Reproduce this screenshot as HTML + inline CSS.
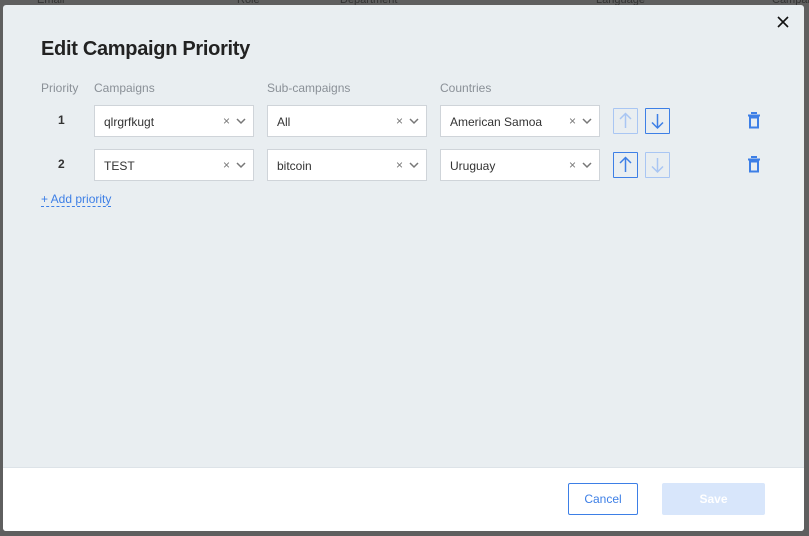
<!DOCTYPE html>
<html><head><style>
*{box-sizing:border-box;margin:0;padding:0}
body{width:809px;height:536px;background:#5f5f5f;font-family:"Liberation Sans",sans-serif;position:relative;overflow:hidden}
.bgt{position:absolute;top:-6px;font-size:11px;color:#333}
.m{position:absolute;left:3px;top:5px;width:801px;height:526px;background:#e9eef1;border-radius:3px;overflow:hidden}
.f{position:absolute;left:0;top:462px;width:801px;height:64px;background:#fff;border-top:1px solid #dde3e8}
.t{position:absolute;left:38px;top:33px;font-size:20px;font-weight:bold;color:#222;letter-spacing:-0.3px}
.x{position:absolute;left:774px;top:11px}
.h{position:absolute;top:76px;font-size:12px;color:#8a9097}
.n{position:absolute;font-size:12px;font-weight:bold;color:#333}
.i{position:absolute;width:160px;height:32px;background:#fff;border:1px solid #cfd4d9;font-size:12px;color:#333;padding:9px 0 0 9px}
.i .c{position:absolute;right:23px;top:8px;color:#777;font-size:12px}
.i svg{position:absolute;right:7px;top:12px}
.b{position:absolute;width:25px;height:26px;border:1px solid #3d7fe6;border-radius:1px}
.b.d{border-color:#a9c6f3}
.tr{position:absolute}
.a{position:absolute;left:38px;top:188px;font-size:12px;color:#3d7fe6;border-bottom:1px dashed #3d7fe6;line-height:13px}
.cn{position:absolute;left:565px;top:478px;width:70px;height:32px;border:1px solid #3d7fe6;border-radius:2px;color:#3d7fe6;font-size:12px;text-align:center;line-height:30px;background:#fff}
.sv{position:absolute;left:659px;top:478px;width:103px;height:32px;background:#d8e6fb;border-radius:2px;color:#fff;font-size:12px;text-align:center;line-height:32px;font-weight:bold}
</style></head><body>
<div class="bgt" style="left:37px">Email</div><div class="bgt" style="left:237px">Role</div><div class="bgt" style="left:340px">Department</div><div class="bgt" style="left:596px">Language</div><div class="bgt" style="left:772px">Campaign</div>
<div class="m">
<div class="t">Edit Campaign Priority</div>
<svg class="x" width="12" height="12"><path d="M1 1l10 10M11 1L1 11" stroke="#111" stroke-width="1.6"/></svg>
<div class="h" style="left:38px">Priority</div>
<div class="h" style="left:91px">Campaigns</div>
<div class="h" style="left:264px">Sub-campaigns</div>
<div class="h" style="left:437px">Countries</div>
<div class="n" style="left:55px;top:108px">1</div>
<div class="n" style="left:55px;top:152px">2</div>

<div class="i" style="left:91px;top:100px">qlrgrfkugt<span class="c">×</span><svg width="10" height="7"><path d="M1 1l4 4 4-4" stroke="#777" stroke-width="1.5" fill="none"/></svg></div>
<div class="i" style="left:264px;top:100px">All<span class="c">×</span><svg width="10" height="7"><path d="M1 1l4 4 4-4" stroke="#777" stroke-width="1.5" fill="none"/></svg></div>
<div class="i" style="left:437px;top:100px">American Samoa<span class="c">×</span><svg width="10" height="7"><path d="M1 1l4 4 4-4" stroke="#777" stroke-width="1.5" fill="none"/></svg></div>
<div class="i" style="left:91px;top:144px">TEST<span class="c">×</span><svg width="10" height="7"><path d="M1 1l4 4 4-4" stroke="#777" stroke-width="1.5" fill="none"/></svg></div>
<div class="i" style="left:264px;top:144px">bitcoin<span class="c">×</span><svg width="10" height="7"><path d="M1 1l4 4 4-4" stroke="#777" stroke-width="1.5" fill="none"/></svg></div>
<div class="i" style="left:437px;top:144px">Uruguay<span class="c">×</span><svg width="10" height="7"><path d="M1 1l4 4 4-4" stroke="#777" stroke-width="1.5" fill="none"/></svg></div>

<div class="b d" style="left:610px;top:103px"><svg width="23" height="24"><path d="M11.5 5v14M6 10l5.5-5.5L17 10" stroke="#a9c6f3" stroke-width="1.5" fill="none"/></svg></div>
<div class="b" style="left:642px;top:103px"><svg width="23" height="24"><path d="M11.5 5v14M6 13.5l5.5 5.5 5.5-5.5" stroke="#3d7fe6" stroke-width="1.5" fill="none"/></svg></div>
<div class="b" style="left:610px;top:147px"><svg width="23" height="24"><path d="M11.5 5v14M6 10l5.5-5.5L17 10" stroke="#3d7fe6" stroke-width="1.5" fill="none"/></svg></div>
<div class="b d" style="left:642px;top:147px"><svg width="23" height="24"><path d="M11.5 5v14M6 13.5l5.5 5.5 5.5-5.5" stroke="#a9c6f3" stroke-width="1.5" fill="none"/></svg></div>

<svg class="tr" style="left:744px;top:107px" width="14" height="17"><path d="M4 1h6M1 3.5h12" stroke="#3d7fe6" stroke-width="2"/><rect x="3" y="5.5" width="8" height="10" stroke="#3d7fe6" stroke-width="2" fill="none"/></svg>
<svg class="tr" style="left:744px;top:151px" width="14" height="17"><path d="M4 1h6M1 3.5h12" stroke="#3d7fe6" stroke-width="2"/><rect x="3" y="5.5" width="8" height="10" stroke="#3d7fe6" stroke-width="2" fill="none"/></svg>

<div class="a">+ Add priority</div>
<div class="f"></div>
<div class="cn">Cancel</div>
<div class="sv">Save</div>
</div>
</body></html>
